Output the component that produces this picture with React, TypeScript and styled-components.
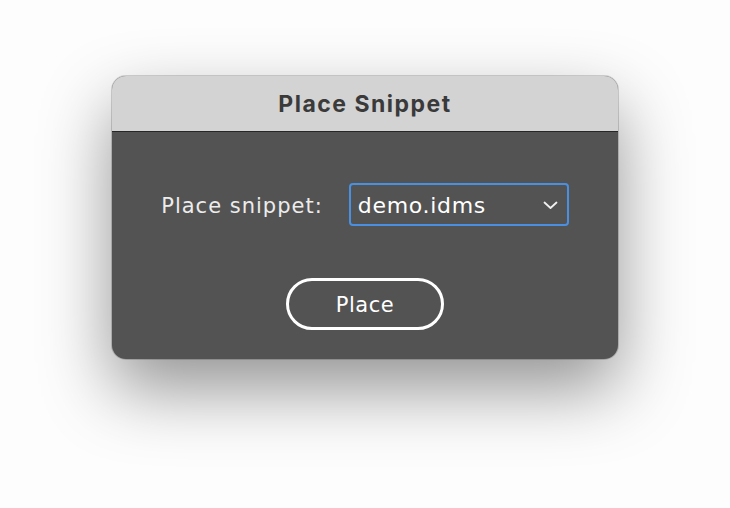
import styled, { createGlobalStyle } from 'styled-components';

const GlobalStyle = createGlobalStyle`
  html, body {
    margin: 0;
    padding: 0;
    background: #ffffff;
  }
  body {
    font-family: "DejaVu Sans", "Open Sans", sans-serif;
  }
`;

const Page = styled.div`
  width: 730px;
  height: 508px;
  padding: 76px 0 0 112px;
  box-sizing: border-box;
  background: #fdfdfd;
`;

const Dialog = styled.div`
  width: 506px;
  height: 283px;
  border-radius: 14px;
  overflow: hidden;
  background: #535353;
  box-shadow: 0 0 0 1px rgba(0, 0, 0, 0.16), 0 30px 70px rgba(0, 0, 0, 0.42);
  display: flex;
  flex-direction: column;
`;

const TitleBar = styled.div`
  height: 55px;
  flex-shrink: 0;
  background: #d3d3d3;
  border-bottom: 1px solid #262626;
  display: flex;
  align-items: center;
  justify-content: center;
  font-family: Inter, "Liberation Sans", sans-serif;
  font-weight: 700;
  font-size: 23px;
  letter-spacing: 1.5px;
  color: #3a3a3a;
`;

const Body = styled.div`
  flex: 1;
  display: flex;
  flex-direction: column;
  align-items: center;
  padding-top: 51px;
  gap: 52px;
`;

const Row = styled.div`
  display: flex;
  align-items: center;
  gap: 26px;
`;

const Label = styled.span`
  font-size: 21px;
  color: #ececec;
  letter-spacing: 1px;
  padding-top: 2px;
`;

const Select = styled.div`
  width: 220px;
  height: 43px;
  box-sizing: border-box;
  border: 2px solid #4a90e2;
  border-radius: 4px;
  display: flex;
  align-items: center;
  justify-content: space-between;
  padding: 2px 9px 0 7px;
  font-size: 22px;
  letter-spacing: 0.7px;
  color: #ffffff;
`;

const Chevron = () => (
  <svg width="15" height="9" viewBox="0 0 15 9" fill="none">
    <path d="M1.5 1.5 L7.5 7 L13.5 1.5" stroke="#f0f0f0" strokeWidth="1.8" strokeLinecap="round" strokeLinejoin="round" />
  </svg>
);

const PlaceButton = styled.button`
  width: 158px;
  height: 52px;
  box-sizing: border-box;
  border: 3px solid #ffffff;
  border-radius: 26px;
  background: transparent;
  color: #ffffff;
  font-family: "DejaVu Sans", sans-serif;
  font-size: 21px;
  letter-spacing: 0.5px;
  padding: 2px 0 0;
`;

export default function App() {
  return (
    <>
      <GlobalStyle />
      <Page>
        <Dialog>
          <TitleBar>Place Snippet</TitleBar>
          <Body>
            <Row>
              <Label>Place snippet:</Label>
              <Select>
                <span>demo.idms</span>
                <Chevron />
              </Select>
            </Row>
            <PlaceButton>Place</PlaceButton>
          </Body>
        </Dialog>
      </Page>
    </>
  );
}
